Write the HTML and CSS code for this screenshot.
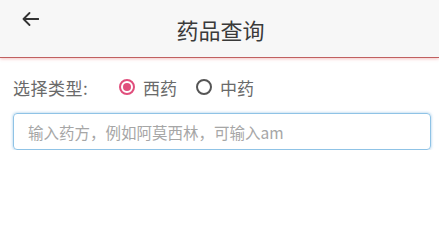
FILE: index.html
```html
<!DOCTYPE html>
<html lang="zh">
<head>
<meta charset="utf-8">
<link rel="stylesheet" href="styles.css">
</head>
<body>
<header class="header">
  <div class="back">
    <svg width="17" height="14" viewBox="0 0 17 14"><path d="M16.5 7 H1.5 M7.5 1 L1.5 7 L7.5 13" fill="none" stroke="#333" stroke-width="1.8" stroke-linecap="round" stroke-linejoin="round"/></svg>
  </div>
  <h1 class="title">药品查询</h1>
  <div></div>
</header>
<main class="content">
  <div class="type-row">
    <span class="label">选择类型:</span>
    <label class="option">
      <span class="radio checked"></span><span class="opt-text">西药</span>
    </label>
    <label class="option">
      <span class="radio"></span><span class="opt-text">中药</span>
    </label>
  </div>
  <div class="search">输入药方，例如阿莫西林，可输入am</div>
</main>
</body>
</html>
```
FILE: styles.css
```css
html, body {
  margin: 0;
  padding: 0;
  background: #ffffff;
  font-family: "Noto Sans CJK SC", "Noto Sans", sans-serif;
}
.header {
  height: 57px;
  background: #f7f7f7;
  border-bottom: 1px solid #c06060;
  box-shadow: 0 1px 3px rgba(225, 90, 90, 0.35);
  display: grid;
  grid-template-columns: 1fr auto 1fr;
  align-items: center;
}
.back {
  align-self: start;
  margin-top: 12px;
  margin-left: 22px;
  height: 14px;
  line-height: 0;
}
.title {
  margin: 0;
  font-size: 22px;
  font-weight: 400;
  color: #3a3a3a;
  line-height: 24px;
  padding-top: 1px;
  padding-left: 2px;
}
.content {
  padding: 17px 8px 0 13px;
}
.type-row {
  display: flex;
  align-items: center;
  height: 24px;
  font-size: 17px;
  color: #6a6a6a;
}
.label {
  width: 106px;
  letter-spacing: 0.5px;
}
.option {
  display: flex;
  align-items: center;
  margin-right: 19px;
}
.opt-text {
  margin-left: 8px;
  color: #6a6a6a;
}
.radio {
  box-sizing: border-box;
  width: 16px;
  height: 16px;
  border-radius: 50%;
  border: 2px solid #555;
  position: relative;
}
.radio.checked {
  border-color: #e04e7c;
}
.radio.checked::after {
  content: "";
  position: absolute;
  left: 2px;
  top: 2px;
  width: 8px;
  height: 8px;
  border-radius: 50%;
  background: #e04e7c;
}
.search {
  margin-top: 14px;
  box-sizing: border-box;
  width: 418px;
  height: 37px;
  border: 1px solid #8fc3e6;
  border-radius: 4px;
  box-shadow: 0 0 3px rgba(90, 160, 215, 0.6);
  padding-left: 14px;
  display: flex;
  align-items: center;
  font-size: 15.5px;
  color: #a6a6a6;
}
```
